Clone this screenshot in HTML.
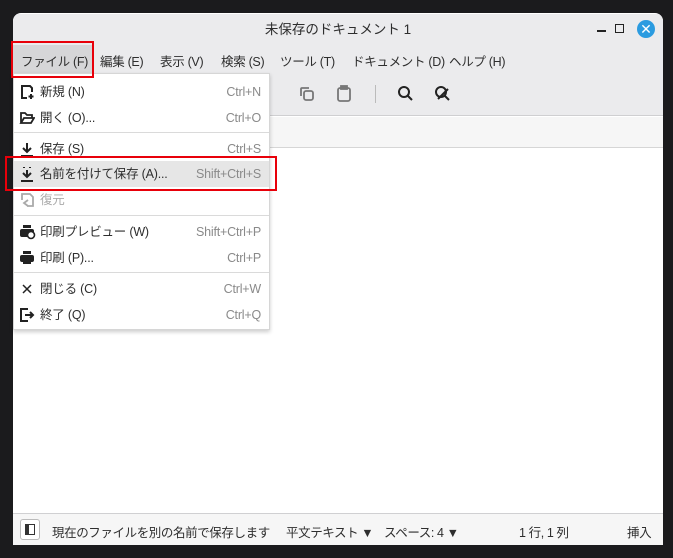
<!DOCTYPE html>
<html><head><meta charset="utf-8"><style>
*{margin:0;padding:0;box-sizing:border-box}
body{width:673px;height:558px;background:#1b1b1d;font-family:"Liberation Sans","Noto Sans CJK JP",sans-serif;font-size:12.5px;color:#2e2e2e;position:relative;overflow:hidden}
.win{position:absolute;left:13px;top:13px;width:650px;height:532px;background:#fff;border-radius:8px 8px 0 0;overflow:hidden}
.title{position:absolute;left:0;top:1px;width:650px;height:32px;background:#ebebed;text-align:center;line-height:32px;font-size:13.5px}
.menubar{position:absolute;left:0;top:32px;width:650px;height:28px;background:#ebebed;font-size:12.5px;letter-spacing:-0.3px}
.menubar span{position:absolute;top:6px}
.tool{position:absolute;left:0;top:60px;width:650px;height:43px;background:#ebebed;border-bottom:1px solid #cfcfd1}
.tabs{position:absolute;left:0;top:104px;width:650px;height:31px;background:#f6f6f6;border-bottom:1px solid #d6d6d6}
.status{position:absolute;left:0;top:500px;width:650px;height:32px;background:#f6f6f6;border-top:1px solid #d0d0d2;letter-spacing:-0.4px}
.status span{position:absolute;top:8px}
.menu{position:absolute;left:13px;top:73px;width:257px;height:257px;background:#fff;border:1px solid #d6d6d6;box-shadow:0 2px 4px rgba(0,0,0,.2);letter-spacing:-0.2px}
.it{position:absolute;left:0;width:255px;height:26px;line-height:26px}
.it .l{position:absolute;left:26px}
.it .r{position:absolute;right:8px;color:#8a8a8a}
.it svg{position:absolute;left:5px;top:5px}
.sep{position:absolute;left:0;width:255px;height:1px;background:#dadada}
.red{position:absolute;border:2px solid #e8000a}
</style></head><body>
<div class="win">
<div class="title">未保存のドキュメント 1</div>
<div style="position:absolute;left:584px;top:17px;width:9px;height:1.5px;background:#222"></div>
<div style="position:absolute;left:602px;top:11px;width:9px;height:9px;border:1.5px solid #222"></div>
<div style="position:absolute;left:624px;top:7px;width:18px;height:18px;border-radius:50%;background:#2b9be0;color:#fff;text-align:center;line-height:18px;font-size:14px">✕</div>
<div class="menubar">
<div style="position:absolute;left:0;top:0;width:80px;height:28px;background:#d6d6d8"></div>
<span style="left:8px">ファイル (F)</span><span style="left:87px">編集 (E)</span><span style="left:147px">表示 (V)</span><span style="left:208px">検索 (S)</span><span style="left:267px">ツール (T)</span><span style="left:339px">ドキュメント (D)</span><span style="left:436px">ヘルプ (H)</span>
</div>
<div class="tool">
<svg style="position:absolute;left:286px;top:13px" width="16" height="16" fill="none" stroke="#777" stroke-width="1.8"><rect x="5" y="5" width="9" height="9" rx="2"/><path d="M2 10V3a1 1 0 0 1 1-1h7"/></svg>
<svg style="position:absolute;left:323px;top:12px" width="16" height="18" fill="none" stroke="#777" stroke-width="1.8"><rect x="2" y="3" width="12" height="13" rx="2"/><rect x="5" y="1" width="6" height="3" fill="#777"/></svg>
<div style="position:absolute;left:362px;top:12px;width:1px;height:18px;background:#bbb"></div>
<svg style="position:absolute;left:384px;top:12px" width="16" height="16" fill="none" stroke="#222" stroke-width="2"><circle cx="7" cy="7" r="5"/><path d="M11 11l4 4"/></svg>
<svg style="position:absolute;left:421px;top:12px" width="18" height="18" fill="none" stroke="#222" stroke-width="2"><circle cx="7" cy="7" r="5"/><path d="M4 14L14 4M11 11l4 4"/></svg>
</div>
<div class="tabs"></div>
<div class="status">
<div style="position:absolute;left:7px;top:5px;width:20px;height:21px;border:1px solid #bbb;border-radius:3px;background:#fff"><div style="position:absolute;left:4px;top:4px;width:10px;height:11px;border:1.5px solid #333;border-left-width:4px"></div></div>
<span style="left:39px">現在のファイルを別の名前で保存します</span>
<span style="left:273px">平文テキスト ▼</span>
<span style="left:371px">スペース: 4 ▼</span>
<span style="left:506px">1 行, 1 列</span>
<span style="left:614px">挿入</span>
</div>
</div>
<div class="menu">
<div class="it" style="top:5px"><svg width="16" height="16" fill="none" stroke="#222" stroke-width="2"><path d="M8 14H3V2h8l2 2v4M12 10v5M9.5 12.5h5"/></svg><span class="l">新規 (N)</span><span class="r">Ctrl+N</span></div>
<div class="it" style="top:31px"><svg width="16" height="16" fill="none" stroke="#222" stroke-width="1.8"><path d="M2 13V3h4l2 2h5v3M2 13l3-5h10l-3 5z"/></svg><span class="l">開く (O)...</span><span class="r">Ctrl+O</span></div>
<div class="sep" style="top:58px"></div>
<div class="it" style="top:62px"><svg width="16" height="16" fill="none" stroke="#222" stroke-width="2"><path d="M8 2v9M4 7l4 4 4-4M2 15h12"/></svg><span class="l">保存 (S)</span><span class="r">Ctrl+S</span></div>
<div class="it" style="top:87px;background:#e6e6e6"><svg width="16" height="16" fill="none" stroke="#222" stroke-width="2"><path d="M8 4v7M4 7l4 4 4-4M2 15h12M5 1v1M11 1v1"/></svg><span class="l">名前を付けて保存 (A)...</span><span class="r">Shift+Ctrl+S</span></div>
<div class="it" style="top:113px;color:#aaa"><svg width="16" height="16" fill="none" stroke="#aaa" stroke-width="1.8"><path d="M3 8V2h8l3 3v9H8M9 8l-4 3 4 3"/></svg><span class="l">復元</span></div>
<div class="sep" style="top:141px"></div>
<div class="it" style="top:145px"><svg width="18" height="16" fill="#222"><rect x="4" y="1" width="8" height="3"/><rect x="1" y="5" width="14" height="8" rx="2"/><circle cx="12" cy="11" r="3.5" fill="#fff" stroke="#222" stroke-width="1.6"/></svg><span class="l">印刷プレビュー (W)</span><span class="r">Shift+Ctrl+P</span></div>
<div class="it" style="top:171px"><svg width="16" height="16" fill="#222"><rect x="4" y="1" width="8" height="3"/><rect x="1" y="5" width="14" height="7" rx="2"/><rect x="4" y="11" width="8" height="3"/></svg><span class="l">印刷 (P)...</span><span class="r">Ctrl+P</span></div>
<div class="sep" style="top:198px"></div>
<div class="it" style="top:202px"><svg width="16" height="16" fill="none" stroke="#222" stroke-width="1.5"><path d="M4 4l8 8M12 4l-8 8"/></svg><span class="l">閉じる (C)</span><span class="r">Ctrl+W</span></div>
<div class="it" style="top:228px"><svg width="16" height="16" fill="none" stroke="#222" stroke-width="2"><path d="M9 2H2v12h7M6 8h8M11 5l3 3-3 3"/></svg><span class="l">終了 (Q)</span><span class="r">Ctrl+Q</span></div>
</div>
<div class="red" style="left:11px;top:41px;width:83px;height:37px"></div>
<div class="red" style="left:5px;top:156px;width:272px;height:35px"></div>
</body></html>
